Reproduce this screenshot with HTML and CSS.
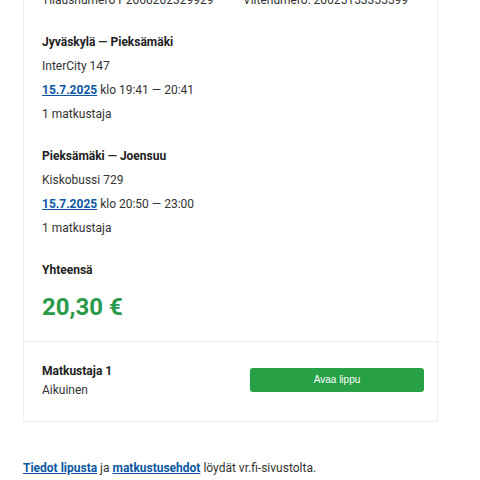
FILE: index.html
```html
<!DOCTYPE html>
<html lang="fi">
<head>
  <meta charset="UTF-8" />
  <meta name="viewport" content="width=device-width, initial-scale=1.0"/>
  <title>VR - Matkalippu</title>
  <link rel="stylesheet" href="styles.css">
</head>
<body>

  <main class="page">
    <div class="card">
      <section class="card-section summary">
        <div class="refs">
          <span>Tilausnumero P2060202329929</span>
          <span>Viitenumero: 20625153355599</span>
        </div>

        <div class="leg">
          <h3>Jyväskylä — Pieksämäki</h3>
          <p>InterCity 147</p>
          <p><a href="#">15.7.2025</a> klo 19:41 — 20:41</p>
          <p>1 matkustaja</p>
        </div>

        <div class="leg">
          <h3>Pieksämäki — Joensuu</h3>
          <p>Kiskobussi 729</p>
          <p><a href="#">15.7.2025</a> klo 20:50 — 23:00</p>
          <p>1 matkustaja</p>
        </div>

        <div class="total">
          <h4>Yhteensä</h4>
          <div class="total-price">20,30 €</div>
        </div>
      </section>

      <section class="card-section passenger">
        <div class="passenger-info">
          <h3>Matkustaja 1</h3>
          <p>Aikuinen</p>
        </div>
        <a class="ticket-btn" href="#">Avaa lippu</a>
      </section>
    </div>

    <p class="footer"><a href="#">Tiedot lipusta</a> ja <a href="#">matkustusehdot</a> löydät vr.fi-sivustolta.</p>
  </main>

</body>
</html>
```

FILE: styles.css
```css
body {
  font-family: Roboto, 'Noto Sans', sans-serif;
  margin: 0;
  padding: 0;
  background: #fff;
  color: #333;
  font-size: 12px;
}

a {
  color: #0b57a4;
  font-weight: bold;
}

.page {
  margin-top: -33px;
  padding: 0 23px;
}

.card {
  width: 413px;
  border: 1px solid #ededed;
}

.card-section {
  padding: 0 18px;
}

.card-section + .card-section {
  border-top: 1px solid #ededed;
}

.summary {
  padding-top: 20px;
  padding-bottom: 16px;
}

.refs {
  display: grid;
  grid-template-columns: 201px 1fr;
  white-space: nowrap;
  line-height: 24px;
  margin-bottom: 18px;
}

.leg {
  margin-bottom: 18px;
}

.leg h3,
.leg p {
  margin: 0;
  line-height: 24px;
  font-size: 12px;
}

.leg h3 {
  font-weight: bold;
  color: #222;
}

.total h4 {
  margin: 0;
  font-size: 12px;
  line-height: 24px;
  color: #222;
}

.total-price {
  font-size: 24px;
  font-weight: bold;
  line-height: 36px;
  color: #2a9a4b;
  margin-top: 7px;
}

.passenger {
  display: flex;
  align-items: center;
  justify-content: space-between;
  padding-top: 20px;
  padding-bottom: 21px;
  padding-right: 13px;
}

.passenger-info h3,
.passenger-info p {
  margin: 0;
  line-height: 19px;
  font-size: 12px;
}

.passenger-info h3 {
  color: #222;
}

.ticket-btn {
  display: block;
  width: 174px;
  height: 24px;
  line-height: 24px;
  margin-top: -2px;
  background: #27a046;
  color: #fff;
  font-family: 'Liberation Sans', Arial, sans-serif;
  font-size: 10px;
  font-weight: normal;
  text-align: center;
  text-decoration: none;
  border-radius: 3px;
}

.footer {
  margin: 34px 0 0;
  line-height: 24px;
}
```
